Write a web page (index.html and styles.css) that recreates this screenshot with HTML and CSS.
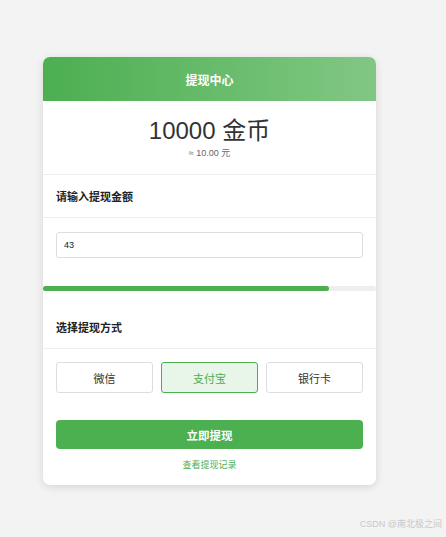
FILE: index.html
```html
<!DOCTYPE html>
<html lang="zh">
<head>
<meta charset="utf-8">
<title>提现中心</title>
<link rel="stylesheet" href="styles.css">
</head>
<body>
<div class="card">
  <div class="header">提现中心</div>
  <div class="balance">
    <div class="coins">10000 金币</div>
    <div class="approx">≈ 10.00 元</div>
  </div>
  <div class="section-title">请输入提现金额</div>
  <div class="input-wrap">
    <input class="amount" type="text" value="43">
  </div>
  <div class="progress"><div class="fill" style="width: 86%"></div></div>
  <div class="section-title second">选择提现方式</div>
  <div class="methods">
    <div class="method">微信</div>
    <div class="method active">支付宝</div>
    <div class="method">银行卡</div>
  </div>
  <div class="actions">
    <div class="submit">立即提现</div>
    <div class="record">查看提现记录</div>
  </div>
</div>
<div class="watermark">CSDN @南北极之间</div>
</body>
</html>
```
FILE: styles.css
```css
html, body {
  margin: 0;
  padding: 0;
  background: #f3f3f3;
  height: 100%;
}
body {
  font-family: "Liberation Sans", Arial, "Noto Sans CJK SC", sans-serif;
  color: #333;
  position: relative;
  padding: 57px 0 0 43px;
  box-sizing: border-box;
}
.card {
  width: 333px;
  background: #fff;
  border-radius: 7px;
  box-shadow: 0 2px 8px rgba(0,0,0,0.12);
  overflow: hidden;
  padding-bottom: 14px;
}
.header {
  height: 44px;
  background: linear-gradient(90deg, #4caf50, #81c784);
  color: #fff;
  font-size: 12px;
  font-weight: bold;
  display: flex;
  align-items: center;
  justify-content: center;
}
.balance {
  height: 74px;
  border-bottom: 1px solid #eee;
  display: flex;
  flex-direction: column;
  align-items: center;
  padding-top: 16px;
  box-sizing: border-box;
}
.coins {
  font-size: 24px;
  line-height: 28px;
  color: #333;
}
.approx {
  font-size: 9px;
  line-height: 12px;
  color: #666;
  margin-top: 2px;
}
.section-title {
  height: 42px;
  border-bottom: 1px solid #eee;
  display: flex;
  align-items: center;
  padding: 0 13px;
  font-size: 11px;
  font-weight: bold;
  color: #222;
}
.section-title.second {
  margin-top: 15px;
}
.input-wrap {
  padding: 14px 13px 28px;
}
.amount {
  display: block;
  width: 100%;
  box-sizing: border-box;
  height: 26px;
  border: 1px solid #ddd;
  border-radius: 3px;
  font-family: "Liberation Sans", Arial, sans-serif;
  font-size: 9px;
  padding: 0 7px;
  color: #222;
  outline: none;
}
.progress {
  height: 5px;
  background: #eee;
  border-radius: 3px;
}
.fill {
  height: 100%;
  background: #4caf50;
  border-radius: 3px;
}
.methods {
  display: flex;
  gap: 8px;
  padding: 13px 13px 0;
}
.method {
  flex: 1;
  height: 31px;
  border: 1px solid #ddd;
  border-radius: 3px;
  box-sizing: border-box;
  display: flex;
  align-items: center;
  justify-content: center;
  font-size: 11px;
  color: #333;
}
.method.active {
  background: #e8f5e9;
  border-color: #4caf50;
  color: #4caf50;
}
.actions {
  padding: 27px 13px 0;
  display: flex;
  flex-direction: column;
  align-items: center;
}
.submit {
  width: 100%;
  height: 29px;
  background: #4caf50;
  border-radius: 4px;
  color: #fff;
  font-size: 11.5px;
  font-weight: bold;
  display: flex;
  align-items: center;
  justify-content: center;
}
.record {
  margin-top: 10px;
  font-size: 9px;
  line-height: 12px;
  color: #4caf50;
}
.watermark {
  position: absolute;
  right: 4px;
  bottom: 7px;
  font-size: 9px;
  color: #c8c8c8;
}
```
